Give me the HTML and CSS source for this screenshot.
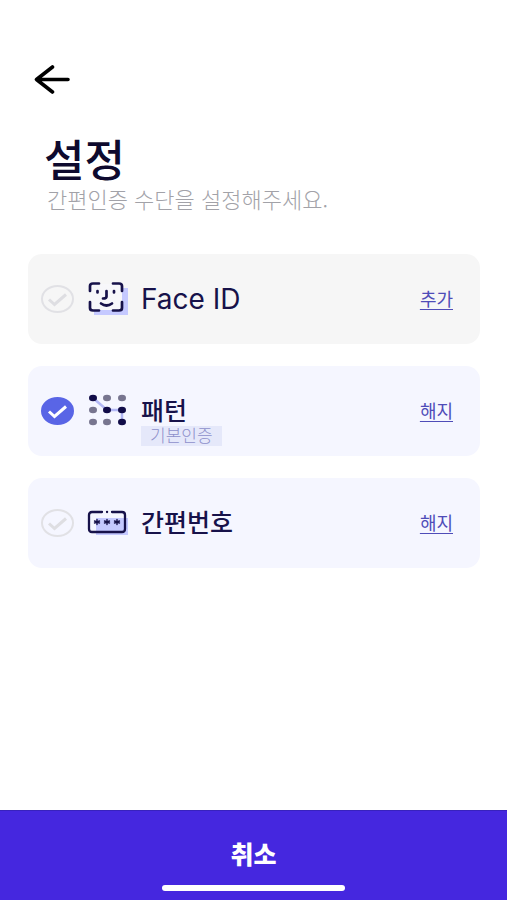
FILE: index.html
```html
<!DOCTYPE html>
<html lang="ko">
<head>
<meta charset="utf-8">
<meta name="viewport" content="width=device-width, initial-scale=1">
<title>설정</title>
<link rel="stylesheet" href="styles.css">
</head>
<body>
<header class="header">
  <button class="back" type="button" aria-label="뒤로">
    <svg width="36" height="30" viewBox="0 0 36 30" fill="none" stroke="#000" stroke-width="3.6" stroke-linecap="round" stroke-linejoin="round"><path d="M34 15.500H2.500M18.500 3 2.500 15.500l16 12.500"/></svg>
  </button>
  <h1 class="title">설정</h1>
  <p class="subtitle">간편인증 수단을 설정해주세요.</p>
</header>
<main class="methods">
  <section class="card card-off">
    <span class="radio">
      <input type="radio" name="method" id="face">
      <svg class="check" viewBox="0 0 33 28"><path d="M8 14.500 13.500 19.500 25 9.500"/></svg>
    </span>
    <svg class="icon" viewBox="0 0 42 36" fill="none">
      <path fill="#c5c9ff" d="M7 7h34v27H7z"/>
      <path fill="#f7f7fa" d="M3 3h32v26H3z"/>
      <g stroke="#17124a" stroke-width="2.700" stroke-linecap="round" stroke-linejoin="round">
        <path d="M3 10V5q0-2.500 3-2.500h6M26 2.500h6q3 0 3 2.500v5M35 21v6q0 2.500-3 2.500h-6M12 29.500H6Q3 29.500 3 27v-6"/>
        <path d="M10.500 10v1.500M27 10v1.500M19.500 10v5.500q0 2-3.500 2M14 22.500q5.500 4 11 0"/>
      </g>
    </svg>
    <label class="name latin" for="face">Face ID</label>
    <a class="action" href="#face">추가</a>
  </section>
  <section class="card">
    <span class="radio">
      <input type="radio" name="method" id="pattern" checked>
      <svg class="check" viewBox="0 0 33 28"><path d="M8 14.500 13.500 19.500 25 9.500"/></svg>
    </span>
    <svg class="icon" viewBox="0 0 42 36">
      <path fill="none" stroke="#b3b8f5" stroke-width="2.500" d="M6 5 20 17h15v12"/>
      <g fill="#77758f"><ellipse cx="20" cy="5" rx="4" ry="3.300"/><ellipse cx="35" cy="5" rx="4" ry="3.300"/><ellipse cx="6" cy="17" rx="4" ry="3.300"/><ellipse cx="6" cy="29" rx="4" ry="3.300"/><ellipse cx="20" cy="29" rx="4" ry="3.300"/></g>
      <g fill="#110c48"><ellipse cx="6" cy="5" rx="4" ry="3.300"/><ellipse cx="20" cy="17" rx="4" ry="3.300"/><ellipse cx="35" cy="17" rx="4" ry="3.300"/><ellipse cx="35" cy="29" rx="4" ry="3.300"/></g>
    </svg>
    <div class="name"><label for="pattern">패턴</label><span class="badge">기본인증</span></div>
    <a class="action" href="#pattern">해지</a>
  </section>
  <section class="card">
    <span class="radio">
      <input type="radio" name="method" id="pin">
      <svg class="check" viewBox="0 0 33 28"><path d="M8 14.500 13.500 19.500 25 9.500"/></svg>
    </span>
    <svg class="icon" viewBox="0 0 42 36" fill="none">
      <path fill="#c5c9ff" d="M9 13h32v17H9z"/>
      <g stroke="#17124a" stroke-width="2.300" stroke-linecap="round">
        <path d="M15 7H5Q2 7 2 10v14q0 3 3 3h30q3 0 3-3V10q0-3-3-3H25M20 7h.1"/>
        <path d="M10 14.500v5M7.500 16l5 2M12.500 16l-5 2M20 14.500v5M17.500 16l5 2M22.500 16l-5 2M30 14.500v5M27.500 16l5 2M32.500 16l-5 2" stroke-width="1.400"/>
      </g>
    </svg>
    <label class="name" for="pin">간편번호</label>
    <a class="action" href="#pin">해지</a>
  </section>
</main>
<button class="cancel" type="button">취소<span class="home-bar"></span></button>
</body>
</html>
```
FILE: styles.css
```css
* { box-sizing: border-box; }

body {
  display: flex;
  flex-direction: column;
  min-height: 100vh;
  margin: 0;
  background: #fff;
  color: #17124a;
  font-family: "Noto Sans CJK KR", sans-serif;
}

.header { padding: 64px 34px 0; }

.back {
  display: block;
  padding: 0;
  border: 0;
  background: none;
}

.back svg { display: block; }

.title {
  margin: 38px 0 0 10px;
  font-size: 44px;
  font-weight: 500;
  line-height: 52px;
  color: #0e0a2e;
}

.subtitle {
  margin: 0 0 0 13px;
  font-size: 22px;
  font-weight: 300;
  line-height: 28px;
  color: #a2a2a8;
}

.methods {
  display: flex;
  flex-direction: column;
  gap: 22px;
  padding: 42px 27px 24px 28px;
}

.card {
  display: flex;
  align-items: center;
  height: 90px;
  padding: 0 27px 1px 13px;
  border-radius: 14px;
  background: #f5f6ff;
}

.card-off { background: #f6f6f6; }

.radio {
  display: grid;
  width: 33px;
  height: 28px;
}

.radio > * { grid-area: 1 / 1; }

.radio input {
  appearance: none;
  width: 100%;
  height: 100%;
  margin: 0;
  border: 2px solid #e1e1e5;
  border-radius: 50%;
}

.radio input:checked {
  border-color: #5965e6;
  background: #5965e6;
}

.check {
  fill: none;
  stroke: #dedee2;
  stroke-width: 3px;
  pointer-events: none;
}

.radio input:checked + .check { stroke: #fff; }

.icon {
  width: 42px;
  height: 36px;
  margin: 0 12px 0 13px;
}

.name {
  position: relative;
  padding-bottom: 3px;
  font-size: 25px;
  font-weight: 500;
  line-height: 28px;
}

.latin {
  padding-bottom: 0;
  font-family: Inter, sans-serif;
  font-size: 28px;
  font-weight: 400;
}

.badge {
  position: absolute;
  top: 100%;
  left: 0;
  padding: 0 9px 2px;
  background: #e5e8fa;
  color: #8e90cb;
  font-size: 17px;
  font-weight: 300;
  line-height: 18px;
  white-space: nowrap;
}

.action {
  margin-left: auto;
  padding-bottom: 2px;
  color: #4f4cb8;
  font-size: 18px;
  line-height: 24px;
  text-underline-offset: 3px;
}

.cancel {
  display: flex;
  flex-direction: column;
  align-items: center;
  justify-content: space-between;
  height: 90px;
  margin-top: auto;
  padding: 26px 0 9px;
  border: 0;
  border-top: 1px solid #3822bd;
  background: #4527df;
  color: #fff;
  font-family: inherit;
  font-size: 25px;
  font-weight: 900;
  line-height: 32px;
}

.home-bar {
  width: 36%;
  height: 6px;
  border-radius: 3px;
  background: #fff;
}
```
